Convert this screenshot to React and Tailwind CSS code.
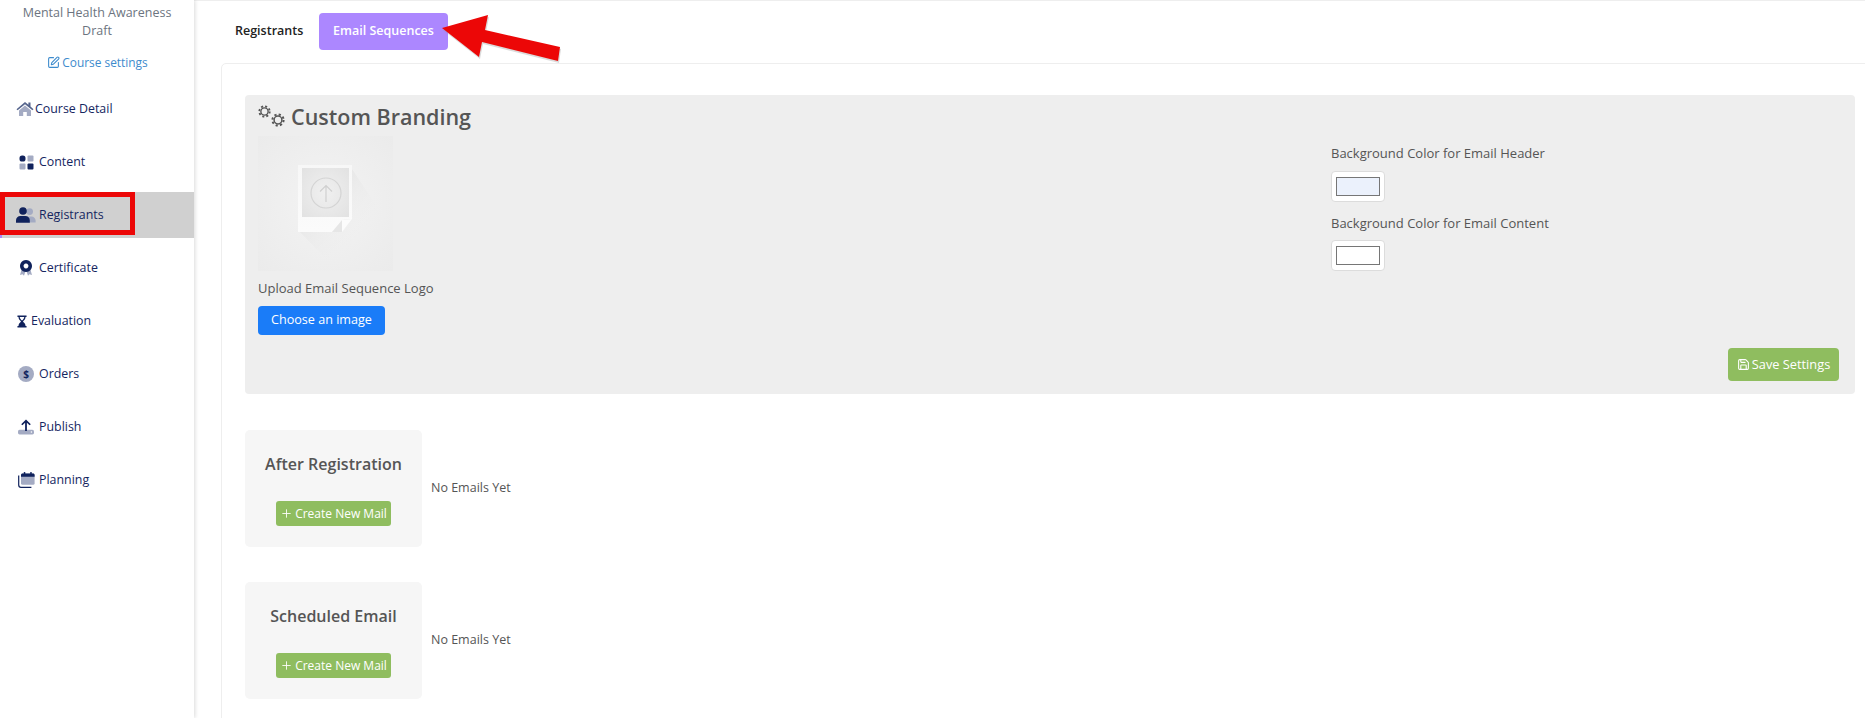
import React from 'react';
import { SquarePen, Save, Plus } from 'lucide-react';

const NAVY = '#10225c';
const SOFT = '#a4abc3';

const HomeIcon = () => (
  <svg width="18" height="16" viewBox="0 0 18 16" className="shrink-0">
    <path d="M9 1 L0.5 8.2 L1.6 9.3 L9 3.2 L16.4 9.3 L17.5 8.2 L14.5 5.6 L14.5 1.6 L12.4 1.6 L12.4 3.8 Z" fill="#55648c" />
    <path d="M9 4.4 L3 9.4 L3 15 L7.2 15 L7.2 11 L10.8 11 L10.8 15 L15 15 L15 9.4 Z" fill={SOFT} />
  </svg>
);

const GridIcon = () => (
  <svg width="15" height="15" viewBox="0 0 15 15" className="shrink-0">
    <rect x="0.5" y="0.5" width="6" height="6" rx="2.6" fill={NAVY} />
    <rect x="8.5" y="0.5" width="6" height="6" rx="1" fill={SOFT} />
    <rect x="0.5" y="8.5" width="6" height="6" rx="1" fill={SOFT} />
    <rect x="8.5" y="8.5" width="6" height="6" rx="1" fill={NAVY} />
  </svg>
);

const UsersIcon = () => (
  <svg width="20" height="17" viewBox="0 0 20 17" className="shrink-0">
    <circle cx="13.6" cy="4.6" r="3.4" fill={SOFT} />
    <path d="M11 9.4 H15.4 C17.8 9.4 19.6 11.4 19.6 13.6 V15.6 H13 Z" fill={SOFT} />
    <circle cx="7" cy="4" r="3.8" fill={NAVY} />
    <path d="M0 15.8 V13.4 C0 10.8 2 9 4.4 9 H9.4 C11.8 9 13.8 10.8 13.8 13.4 V15.8 Z" fill={NAVY} />
  </svg>
);

const AwardIcon = () => (
  <svg width="14" height="16" viewBox="0 0 14 16" className="shrink-0">
    <path d="M2.6 9.5 L1 15 L3.6 14.2 L5 15.8 L6.6 11 Z M11.4 9.5 L13 15 L10.4 14.2 L9 15.8 L7.4 11 Z" fill={SOFT} />
    <path d="M7 0 A6 6 0 1 0 7.01 0 Z M7 3.6 A2.4 2.4 0 1 1 6.99 3.6 Z" fill={NAVY} fillRule="evenodd" />
  </svg>
);

const HourglassIcon = () => (
  <svg width="10" height="13" viewBox="0 0 11 14" className="shrink-0">
    <path d="M0.5 0.5 H10.5 V2 H9.4 C9.4 5 7 6 6.6 7 C7 8 9.4 9 9.4 12 H10.5 V13.5 H0.5 V12 H1.6 C1.6 9 4 8 4.4 7 C4 6 1.6 5 1.6 2 H0.5 Z M3 2 C3 3.6 4.6 5 5.5 6 C6.4 5 8 3.6 8 2 Z" fill={NAVY} fillRule="evenodd" />
    <path d="M3 12 C3.4 10.4 4.8 9.6 5.5 9 C6.2 9.6 7.6 10.4 8 12 Z" fill={NAVY} />
  </svg>
);

const DollarIcon = () => (
  <svg width="16" height="16" viewBox="0 0 16 16" className="shrink-0">
    <circle cx="8" cy="8" r="8" fill={SOFT} />
    <text x="8" y="11.5" textAnchor="middle" fontSize="10" fontWeight="700" fill={NAVY} fontFamily="Open Sans, sans-serif">$</text>
  </svg>
);

const PublishIcon = () => (
  <svg width="16" height="16" viewBox="0 0 16 16" className="shrink-0">
    <rect x="0" y="10.8" width="16" height="4.6" rx="1.6" fill={SOFT} />
    <circle cx="13.4" cy="13" r="0.8" fill="#fff" />
    <path d="M8 0.5 L12.8 5.2 L11.6 6.3 L8.9 3.8 V12 H7.1 V3.8 L4.4 6.3 L3.2 5.2 Z" fill={NAVY} />
  </svg>
);

const PlanningIcon = () => (
  <svg width="17" height="16" viewBox="0 0 17 16" className="shrink-0">
    <path d="M0.7 3.5 V13 C0.7 14.4 1.6 15.3 3 15.3 H13.4" fill="none" stroke={NAVY} strokeWidth="1.2" />
    <rect x="3" y="1.4" width="13.6" height="11.4" rx="1.6" fill={SOFT} />
    <path d="M3 4.8 V3 C3 2 3.7 1.4 4.6 1.4 H15 C16 1.4 16.6 2 16.6 3 V4.8 Z" fill={NAVY} />
    <rect x="5.8" y="0" width="1.5" height="3" rx="0.6" fill={NAVY} />
    <rect x="12.2" y="0" width="1.5" height="3" rx="0.6" fill={NAVY} />
  </svg>
);

const navItems = [
  { label: 'Course Detail', icon: <HomeIcon />, pad: 'pl-4', gap: 'gap-[1px]' },
  { label: 'Content', icon: <GridIcon />, pad: 'pl-[19px]', gap: 'gap-[5px]' },
  { label: 'Registrants', icon: <UsersIcon />, pad: 'pl-[14px]', gap: 'gap-[3px]', active: true },
  { label: 'Certificate', icon: <AwardIcon />, pad: 'pl-[19px]', gap: 'gap-[6px]' },
  { label: 'Evaluation', icon: <HourglassIcon />, pad: 'pl-[17px]', gap: 'gap-[4px]' },
  { label: 'Orders', icon: <DollarIcon />, pad: 'pl-[18px]', gap: 'gap-[5px]' },
  { label: 'Publish', icon: <PublishIcon />, pad: 'pl-[18px]', gap: 'gap-[5px]' },
  { label: 'Planning', icon: <PlanningIcon />, pad: 'pl-[18px]', gap: 'gap-[4px]' },
];

const UploadPlaceholder = () => (
  <svg width="135" height="135" viewBox="0 0 135 135" className="block">
    <defs>
      <radialGradient id="bgGrad" cx="50%" cy="50%" r="70%">
        <stop offset="0%" stopColor="#f3f3f3" />
        <stop offset="100%" stopColor="#ebebeb" />
      </radialGradient>
      <linearGradient id="shadowGrad" x1="0.1" y1="0.1" x2="0.75" y2="0.75">
        <stop offset="0%" stopColor="#dfdfdf" />
        <stop offset="100%" stopColor="#f0f0f0" stopOpacity="0" />
      </linearGradient>
      <linearGradient id="paperGrad" x1="0" y1="0" x2="0" y2="1">
        <stop offset="0%" stopColor="#f7f7f7" />
        <stop offset="100%" stopColor="#fbfbfb" />
      </linearGradient>
      <radialGradient id="innerGrad" cx="50%" cy="50%" r="70%">
        <stop offset="0%" stopColor="#f0f0f0" />
        <stop offset="100%" stopColor="#e2e2e2" />
      </radialGradient>
    </defs>
    <rect width="135" height="135" fill="url(#bgGrad)" />
    <path d="M94 33 L125 80 L110 125 L70 125 L41 95 Z" fill="url(#shadowGrad)" />
    <path d="M40 29 H94 V83 L84 96 H40 Z" fill="url(#paperGrad)" />
    <rect x="44" y="32" width="47" height="49" fill="url(#innerGrad)" />
    <path d="M94 83 L84 96 L74 96 L84 84 Z" fill="#e6e6e6" />
    <path d="M94 83 L84 84 L84 96 Z" fill="#fcfcfc" />
    <circle cx="68" cy="57" r="15" fill="none" stroke="#d4d4d4" strokeWidth="1.2" />
    <path d="M68 66 V50 M62 55.5 L68 49.5 L74 55.5" fill="none" stroke="#d0d0d0" strokeWidth="1.2" />
  </svg>
);

const Gear = ({ size }) => (
  <svg width={size} height={size} viewBox="0 0 14 14">
    <circle cx="7" cy="7" r="3.9" fill="none" stroke="#555555" strokeWidth="1.5" />
    <circle cx="7" cy="7" r="5.6" fill="none" stroke="#555555" strokeWidth="2" strokeDasharray="2.2 2.2" />
  </svg>
);

const Swatch = ({ color }) => (
  <div className="w-[54px] h-[31px] bg-white border border-[#dcdcdc] rounded-[4px] px-[4px] py-[5px]">
    <div className="w-full h-full border border-[#767676]" style={{ backgroundColor: color }} />
  </div>
);

const EmailBlock = ({ title }) => (
  <div className="flex items-center">
    <div className="w-[177px] h-[117px] bg-[#f6f6f6] rounded-[5px] flex flex-col items-center pt-[22px]">
      <h3 className="text-[16px] leading-[24px] font-semibold text-[#555555]">{title}</h3>
      <button type="button" className="mt-[25px] w-[115px] h-[25px] bg-[#8fbd5f] text-white text-[12px] rounded-[3px] flex items-center justify-center gap-[2px]">
        <Plus size={13} strokeWidth={1.6} />
        <span>Create New Mail</span>
      </button>
    </div>
    <span className="ml-[9px] -mt-[1px] text-[12.5px] text-[#555555]">No Emails Yet</span>
  </div>
);

export default function App() {
  return (
    <div className="relative flex w-[1865px] h-[718px] overflow-hidden bg-white font-['Open_Sans',sans-serif]">

      {/* Sidebar */}
      <aside className="w-[194px] shrink-0 h-full bg-white shadow-[1px_0_4px_rgba(0,0,0,0.15)] z-10">
        <div className="pt-[4px] text-center">
          <p className="text-[12.5px] leading-[18px] text-[#6c7480]">Mental Health Awareness<br />Draft</p>
          <a className="mt-[14px] pl-[1px] flex items-center justify-center gap-[2px] text-[11.9px] leading-[17px] text-[#3d8bcd]">
            <SquarePen size={13} />
            <span>Course settings</span>
          </a>
        </div>
        <nav className="mt-[15px] flex flex-col gap-[7px]">
          {navItems.map((item) => (
            <div
              key={item.label}
              className={`h-[46px] flex items-center ${item.pad} ${item.gap} text-[12.4px] text-[#15265f] ${item.active ? 'bg-[#d0d0d0] border-l-2 border-[#ac87ff]' : ''}`}
            >
              {item.icon}
              <span>{item.label}</span>
            </div>
          ))}
        </nav>
      </aside>

      {/* Main */}
      <main className="flex-1 min-w-0 overflow-hidden border-t border-[#eeeeee] pt-[12px] pl-[27px]">
        <div className="flex items-center h-[37px]">
          <span className="ml-[14px] w-[69px] text-[12.5px] font-semibold text-[#222222]">Registrants</span>
          <button type="button" className="ml-[15px] w-[129px] h-[37px] bg-[#ac87ff] text-white text-[12.5px] font-semibold rounded-[4px]">
            Email Sequences
          </button>
        </div>

        <div className="mt-[13px] w-[1700px] h-[700px] border border-[#eeeeee] rounded-[5px] pt-[31px] pl-[23px]">
          <section className="w-[1610px] h-[299px] bg-[#eeeeee] rounded-[4px] pl-[13px] pr-[13px] pt-[6px]">
            <div className="flex items-center h-[32px]">
              <span className="relative block w-[28px] h-[24px] shrink-0">
                <span className="absolute left-0 top-0"><Gear size={13} /></span>
                <span className="absolute left-[13px] top-[8px]"><Gear size={14} /></span>
              </span>
              <h2 className="ml-[5px] -mt-[1px] text-[21.5px] leading-[30px] font-semibold text-[#555555]">Custom Branding</h2>
            </div>
            <div className="flex">
              <div className="w-[1073px] shrink-0 pt-[3px]">
                <UploadPlaceholder />
                <p className="mt-[8px] text-[13px] leading-[18px] font-medium text-[#555555]">Upload Email Sequence Logo</p>
                <button type="button" className="mt-[9px] w-[127px] h-[29px] bg-[#1a7cf8] text-white text-[12.6px] rounded-[4px]">
                  Choose an image
                </button>
              </div>
              <div className="pt-[11px]">
                <p className="text-[13px] leading-[18px] font-medium text-[#555555]">Background Color for Email Header</p>
                <div className="mt-[9px]"><Swatch color="#ebf1fc" /></div>
                <p className="mt-[12px] text-[13px] leading-[18px] font-medium text-[#555555]">Background Color for Email Content</p>
                <div className="mt-[8px]"><Swatch color="#ffffff" /></div>
              </div>
            </div>
            <div className="flex justify-end mt-[13px] pr-[3px]">
              <button type="button" className="w-[111px] h-[33px] bg-[#8fbd5f] text-white text-[12.8px] rounded-[4px] flex items-center justify-center gap-[2px]">
                <Save size={13} />
                <span>Save Settings</span>
              </button>
            </div>
          </section>

          <div className="mt-[36px] flex flex-col gap-[35px]">
            <EmailBlock title="After Registration" />
            <EmailBlock title="Scheduled Email" />
          </div>
        </div>
      </main>

      {/* Annotations */}
      <div className="absolute left-0 top-[192px] w-[135px] h-[43px] border-[5px] border-[#ec0707] z-20" />
      <svg className="absolute left-[430px] top-[5px] z-20" width="140" height="65" viewBox="430 5 140 65">
        <path d="M442 28 L488 15 L485 30 L560 47 L558 61 L482 42 L479 57 Z" fill="#999" opacity="0.35" transform="translate(1 2)" />
        <path d="M442 28 L488 15 L485 30 L560 47 L558 61 L482 42 L479 57 Z" fill="#ec0707" />
      </svg>
    </div>
  );
}
